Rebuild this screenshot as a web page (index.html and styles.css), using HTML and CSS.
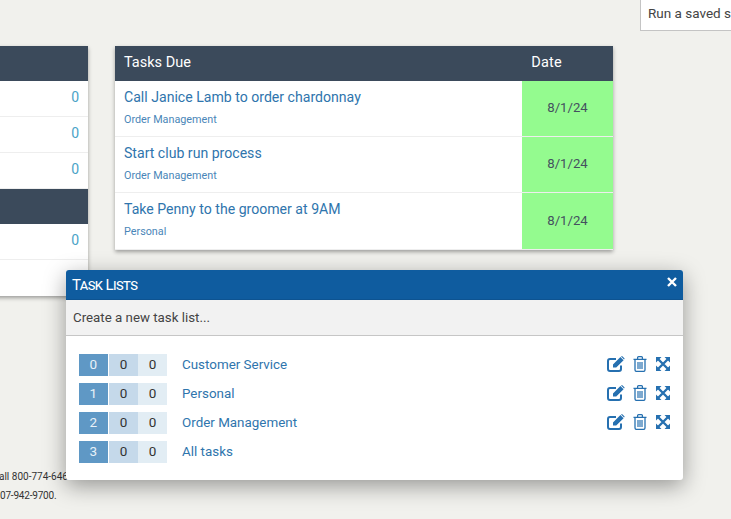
FILE: index.html
```html
<!DOCTYPE html>
<html lang="en">
<head>
<meta charset="utf-8">
<title>Tasks</title>
<link rel="stylesheet" href="styles.css">
</head>
<body>
<div class="tooltip">Run a saved search</div>
<main class="board">
  <section class="card left-card">
    <div class="head"></div>
    <div class="count-row">0</div>
    <div class="count-row">0</div>
    <div class="count-row">0</div>
    <div class="head"></div>
    <div class="count-row">0</div>
    <div class="count-row last"></div>
  </section>
  <section class="card tasks-card">
    <div class="head tasks-head"><span>Tasks Due</span><span class="date-title">Date</span></div>
    <div class="task"><div class="task-main"><a class="task-name">Call Janice Lamb to order chardonnay</a><a class="task-list">Order Management</a></div><div class="task-date">8/1/24</div></div>
    <div class="task"><div class="task-main"><a class="task-name">Start club run process</a><a class="task-list">Order Management</a></div><div class="task-date">8/1/24</div></div>
    <div class="task"><div class="task-main"><a class="task-name">Take Penny to the groomer at 9AM</a><a class="task-list">Personal</a></div><div class="task-date">8/1/24</div></div>
  </section>
</main>
<footer class="foot">
  <div class="foot-a">all 800-774-6464</div>
  <div class="foot-b">07-942-9700.</div>
</footer>
<section class="dialog">
  <header class="dialog-title"><span>Task Lists</span>
    <svg class="close" viewBox="0 0 12 12"><path d="M2 2l8 8M10 2l-8 8"/></svg>
  </header>
  <div class="create">Create a new task list...</div>
  <div class="lists">
    <div class="list-row">
      <div class="nums"><span class="n1">0</span><span class="n2">0</span><span class="n3">0</span></div>
      <a class="list-name">Customer Service</a>
      <div class="actions">
        <svg class="ico" viewBox="0 0 18 16"><use href="#edit"/></svg>
        <svg class="ico" viewBox="0 0 18 16"><use href="#trash"/></svg>
        <svg class="ico" viewBox="0 0 18 16"><use href="#expand"/></svg>
      </div>
    </div>
    <div class="list-row">
      <div class="nums"><span class="n1">1</span><span class="n2">0</span><span class="n3">0</span></div>
      <a class="list-name">Personal</a>
      <div class="actions">
        <svg class="ico" viewBox="0 0 18 16"><use href="#edit"/></svg>
        <svg class="ico" viewBox="0 0 18 16"><use href="#trash"/></svg>
        <svg class="ico" viewBox="0 0 18 16"><use href="#expand"/></svg>
      </div>
    </div>
    <div class="list-row">
      <div class="nums"><span class="n1">2</span><span class="n2">0</span><span class="n3">0</span></div>
      <a class="list-name">Order Management</a>
      <div class="actions">
        <svg class="ico" viewBox="0 0 18 16"><use href="#edit"/></svg>
        <svg class="ico" viewBox="0 0 18 16"><use href="#trash"/></svg>
        <svg class="ico" viewBox="0 0 18 16"><use href="#expand"/></svg>
      </div>
    </div>
    <div class="list-row">
      <div class="nums"><span class="n1">3</span><span class="n2">0</span><span class="n3">0</span></div>
      <a class="list-name">All tasks</a>
    </div>
  </div>
</section>
<svg class="defs" width="0" height="0">
  <symbol id="edit" viewBox="0 0 18 16">
    <path fill="none" stroke="currentColor" stroke-width="2" d="M14 9.500V13a2 2 0 0 1-2 2H3a2 2 0 0 1-2-2V5a2 2 0 0 1 2-2h6"/>
    <path fill="currentColor" d="M6 8.400L13.400 1l3.200 3.200L9.200 11.600H6zM14.400.3l.6-.3 2.600 2.600-.3.7-.3.2-2.900-3z"/>
  </symbol>
  <symbol id="trash" viewBox="0 0 18 16">
    <path fill="none" stroke="currentColor" stroke-width="1.300" d="M2.500 3.400h13M4 3.400v10.400c0 .9.6 1.600 1.400 1.600h7.200c.8 0 1.400-.7 1.400-1.600V3.400M6.600 3.200V1.600c0-.5.4-.9.9-.9h3c.5 0 .9.400.9.900v1.600"/>
    <path fill="none" stroke="currentColor" stroke-width="1.200" d="M7 6v7M9 6v7M11 6v7"/>
  </symbol>
  <symbol id="expand" viewBox="0 0 18 16">
    <path fill="currentColor" d="M1 1h5.500L1 6.500zM15 1H9.500L15 6.500zM1 15h5.500L1 9.500zM15 15H9.500L15 9.500z"/>
    <path fill="none" stroke="currentColor" stroke-width="2.400" d="M3 3l10 10M13 3L3 13"/>
  </symbol>
</svg>
</body>
</html>
```
FILE: styles.css
```css
* { box-sizing: border-box; }
html, body { margin: 0; height: 519px; overflow: hidden; }
body {
  background: #f1f1ed;
  font-family: "Roboto", "Liberation Sans", sans-serif;
  color: #3b4a5a;
  position: relative;
  width: 731px;
}
.tooltip {
  position: absolute;
  left: 640px;
  top: -5px;
  width: 120px;
  height: 36px;
  padding: 8px 7px;
  background: #fff;
  border: 1px solid #c4c4c4;
  font-size: 13.500px;
  line-height: 19px;
  color: #444;
  white-space: nowrap;
}
.board {
  display: flex;
  gap: 27px;
  padding-top: 46px;
  margin-left: -60px;
}
.card {
  background: #fff;
  box-shadow: 0 2px 4px rgba(0,0,0,.35);
  flex: none;
}
.left-card { width: 148px; height: 250px; }
.tasks-card { width: 498px; height: 204px; }
.head {
  height: 35px;
  background: #3b4a5b;
  color: #fff;
  font-size: 14.500px;
}
.count-row {
  height: 36px;
  padding: 0 9px;
  border-bottom: 1px solid #eee;
  color: #4ba3c7;
  font-size: 14px;
  line-height: 33px;
  text-align: right;
}
.last { border-bottom: 0; }
.tasks-head {
  display: flex;
  justify-content: space-between;
  align-items: center;
  padding: 0 51px 2px 9px;
}
.date-title { letter-spacing: .25px; }
.task {
  display: flex;
  height: 56px;
  border-bottom: 1px solid #eee;
}
.task:last-child { height: 57px; }
.task:last-child .task-date { line-height: 55px; }
.task-main { flex: 1; padding: 7px 9px; }
.task-name {
  display: block;
  font-size: 14.100px;
  line-height: 18px;
  color: #2f75ad;
}
.task-list {
  display: block;
  margin-top: 7px;
  font-size: 10.800px;
  line-height: 14px;
  color: #4a86b8;
}
.task-date {
  width: 91px;
  background: #94fb8f;
  text-align: center;
  font-size: 13.200px;
  line-height: 53px;
  color: #44505f;
}
.foot {
  position: absolute;
  left: 0;
  top: 467px;
  font-size: 10px;
  line-height: 19px;
  color: #333;
  white-space: nowrap;
}
.foot-a { margin-left: -1px; }
.foot-b { letter-spacing: -.2px; }
.dialog {
  position: absolute;
  left: 66px;
  top: 270px;
  width: 617px;
  height: 210px;
  background: #fff;
  border-radius: 3px;
  box-shadow: 0 6px 22px rgba(0,0,0,.38);
  overflow: hidden;
}
.dialog-title {
  display: flex;
  justify-content: space-between;
  align-items: center;
  height: 30px;
  padding: 0 5px 0 6px;
  background: #0f5c9f;
  border-bottom: 1px solid #0d5391;
  color: #fff;
  font-size: 15px;
  letter-spacing: -.6px;
  font-variant: small-caps;
}
.close { width: 12px; height: 12px; margin-top: -5px; }
.close path { fill: none; stroke: #fff; stroke-width: 2.400; }
.create {
  height: 36px;
  padding: 0 7px;
  background: #f2f2f2;
  border-bottom: 1px solid #c6c6c6;
  font-size: 13.300px;
  line-height: 35px;
  color: #444;
}
.lists { padding: 18px 13px 0; }
.list-row {
  display: flex;
  align-items: flex-start;
  height: 29px;
  font-size: 13.500px;
}
.nums { display: flex; width: 88px; height: 22px; }
.nums span { width: 29px; text-align: center; line-height: 21px; }
.n1 { background: #5f98c5; color: #e8f1f8; }
.n2 { background: #c5d9ea; color: #333; margin: 0 0 0 1px; width: 30px !important; }
.n3 { background: #e2edf4; color: #333; }
.list-name {
  margin-left: 15px;
  font-size: 13.400px;
  line-height: 21px;
  color: #2f75ad;
}
.actions {
  display: flex;
  gap: 6px;
  margin-left: auto;
  margin-right: -3px;
  padding-top: 2px;
  color: #2670b0;
}
.ico { width: 18px; height: 16px; }
.defs { position: absolute; }
```
